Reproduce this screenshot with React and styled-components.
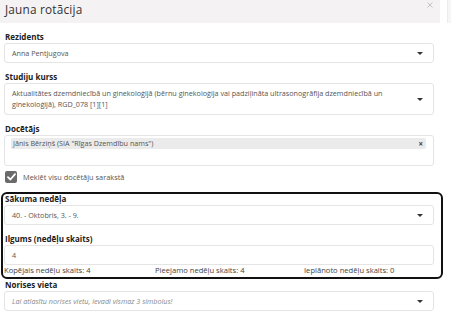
import React from 'react';
import styled, { createGlobalStyle } from 'styled-components';

const Global = createGlobalStyle`
  html, body { margin: 0; padding: 0; background: #fff; }
  body { font-family: "Open Sans", "Noto Sans", sans-serif; color: #444; }
  * { box-sizing: border-box; }
`;

const Page = styled.div`
  display: flex;
  width: 451px;
  height: 319px;
  overflow: hidden;
`;

const Modal = styled.div`
  width: 440px;
  flex: none;
`;

const SideStrip = styled.div`
  margin-left: 7px;
  flex: 1;
  height: 23px;
  background: #f6f6f6;
  border-left: 1px solid #ececec;
`;

const Header = styled.div`
  position: relative;
  height: 23px;
  background: #f4f2f2;
  display: flex;
  align-items: flex-start;
  padding: 1px 0 0 5px;
`;

const Title = styled.h4`
  margin: 0;
  font-size: 11.8px;
  line-height: 16px;
  font-weight: 400;
  color: #333;
  letter-spacing: 0.2px;
`;

const Close = styled.button`
  position: absolute;
  right: 7px;
  top: 2px;
  width: 6px;
  height: 6px;
  padding: 0;
  border: 0;
  background: none;
  display: flex;
`;

const Body = styled.div`
  padding: 9px 0 0 4px;
  width: 434px;
  display: flex;
  flex-direction: column;
`;

const Field = styled.div`
  display: flex;
  flex-direction: column;
  margin-top: ${p => p.$top ?? 9}px;
`;

const Label = styled.label`
  font-size: 8px;
  font-weight: 700;
  line-height: 10px;
  color: #222;
  margin-bottom: 1px;
  padding-left: 1px;
`;

const Control = styled.div`
  position: relative;
  min-height: ${p => p.$h || 20}px;
  border: 1px solid #e4e4e4;
  border-radius: 3px;
  background: #fff;
  padding: ${p => p.$pad || '0 30px 0 7px'};
  display: flex;
  align-items: ${p => p.$align || 'center'};
  font-size: 7.2px;
  line-height: 11px;
  color: #555;
`;

const Placeholder = styled.span`
  font-style: italic;
  color: #8a8a8a;
`;

const Caret = styled.span`
  position: absolute;
  right: 10px;
  top: 50%;
  margin-top: -1px;
  width: 0;
  height: 0;
  border-left: 3px solid transparent;
  border-right: 3px solid transparent;
  border-top: 3.5px solid #333;
`;

const Chip = styled.div`
  position: relative;
  width: 415px;
  height: 11px;
  background: #ebebeb;
  border-radius: 2px;
  padding-left: 2px;
  font-size: 7.2px;
  line-height: 11px;
  color: #555;
`;

const ChipRemove = styled.span`
  position: absolute;
  right: 3px;
  top: 0;
  font-size: 8px;
  font-weight: 700;
  color: #444;
`;

const CheckRow = styled.div`
  display: flex;
  align-items: center;
  gap: 6px;
  margin-top: 5px;
  padding-left: 1px;
  height: 12px;
  font-size: 7.4px;
  color: #555;
`;

const CheckBox = styled.span`
  width: 12px;
  height: 12px;
  border-radius: 2px;
  background: #6a6a6a;
  display: flex;
  align-items: center;
  justify-content: center;
`;

const Highlight = styled.div`
  margin: 9px -9px 0 -3px;
  border: 2px solid #111;
  border-radius: 6px;
  padding: 0 7px 2px 1px;
`;

const Stats = styled.div`
  display: grid;
  grid-template-columns: 151px 149px 1fr;
  font-size: 7.6px;
  line-height: 10px;
  color: #444;
`;

export default function App() {
  return (
    <Page>
      <Global />
      <Modal>
        <Header>
          <Title>Jauna rotācija</Title>
          <Close aria-label="Aizvērt">
            <svg width="6" height="6" viewBox="0 0 6 6">
              <path d="M0.5 0.5 L5.5 5.5 M5.5 0.5 L0.5 5.5" stroke="#c4c4c4" strokeWidth="1" />
            </svg>
          </Close>
        </Header>
        <Body>
          <Field $top={0}>
            <Label>Rezidents</Label>
            <Control>
              Anna Pentjugova
              <Caret />
            </Control>
          </Field>
          <Field>
            <Label>Studiju kurss</Label>
            <Control $h={31} $pad="4px 38px 4px 7px">
              Aktualitātes dzemdniecībā un ginekoloģijā (bērnu ginekoloģija vai padziļināta ultrasonogrāfija dzemdniecībā un ginekoloģijā), RGD_078 [1][1]
              <Caret />
            </Control>
          </Field>
          <Field>
            <Label>Docētājs</Label>
            <Control $h={31} $pad="2px 6px" $align="flex-start">
              <Chip>
                Jānis Bērziņš (SIA "Rīgas Dzemdību nams")
                <ChipRemove>×</ChipRemove>
              </Chip>
            </Control>
          </Field>
          <CheckRow>
            <CheckBox>
              <svg width="9" height="8" viewBox="0 0 9 8">
                <path d="M1 4.2 L3.4 6.5 L8 1.2" fill="none" stroke="#fff" strokeWidth="1.8" strokeLinecap="round" strokeLinejoin="round" />
              </svg>
            </CheckBox>
            Meklēt visu docētāju sarakstā
          </CheckRow>
          <Highlight>
            <Field $top={0}>
              <Label>Sākuma nedēļa</Label>
              <Control>
                40. - Oktobris, 3. - 9.
                <Caret />
              </Control>
            </Field>
            <Field>
              <Label>Ilgums (nedēļu skaits)</Label>
              <Control>4</Control>
            </Field>
            <Stats>
              <span>Kopējais nedēļu skaits: 4</span>
              <span>Pieejamo nedēļu skaits: 4</span>
              <span>Ieplānoto nedēļu skaits: 0</span>
            </Stats>
          </Highlight>
          <Field $top={1}>
            <Label>Norises vieta</Label>
            <Control>
              <Placeholder>Lai atlasītu norises vietu, ievadi vismaz 3 simbolus!</Placeholder>
              <Caret />
            </Control>
          </Field>
        </Body>
      </Modal>
      <SideStrip />
    </Page>
  );
}
